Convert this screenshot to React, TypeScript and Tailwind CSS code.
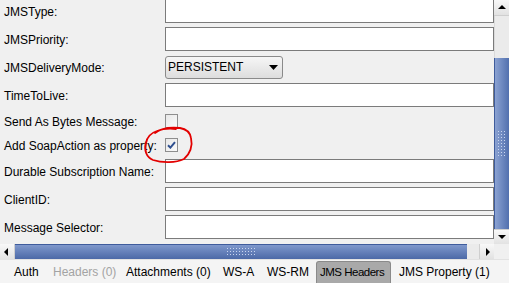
import React from 'react';

type Row = { label: string; kind: 'text' | 'select' | 'check'; checked?: boolean };

const rows: Row[] = [
  { label: 'JMSType:', kind: 'text' },
  { label: 'JMSPriority:', kind: 'text' },
  { label: 'JMSDeliveryMode:', kind: 'select' },
  { label: 'TimeToLive:', kind: 'text' },
  { label: 'Send As Bytes Message:', kind: 'check' },
  { label: 'Add SoapAction as property:', kind: 'check', checked: true },
  { label: 'Durable Subscription Name:', kind: 'text' },
  { label: 'ClientID:', kind: 'text' },
  { label: 'Message Selector:', kind: 'text' },
];

const tabs = [
  { name: 'Auth', w: 'w-[39px]' },
  { name: 'Headers (0)', w: 'w-[73px]', disabled: true },
  { name: 'Attachments (0)', w: 'w-[97px]' },
  { name: 'WS-A', w: 'w-[44px]' },
  { name: 'WS-RM', w: 'w-[49px]' },
  { name: 'JMS Headers', w: 'w-[75px]', selected: true },
  { name: 'JMS Property (1)', w: 'w-[100px]' },
];

function Grip({ vertical }: { vertical?: boolean }) {
  return (
    <div
      className={`${vertical ? 'w-[10px] h-[28px]' : 'w-[30px] h-[10px]'} bg-[radial-gradient(circle,#c9d5ef_0.8px,transparent_1px)] bg-[length:3px_3px]`}
    />
  );
}

function Arrow({ dir }: { dir: 'up' | 'down' | 'left' | 'right' }) {
  const pts = {
    up: '1,6 9,6 5,2',
    down: '1,3 9,3 5,7',
    left: '6,1 6,9 2,5',
    right: '4,1 4,9 8,5',
  }[dir];
  return (
    <svg width="10" height="10" viewBox="0 0 10 10">
      <polygon points={pts} fill="#000" />
    </svg>
  );
}

function Field({ row }: { row: Row }) {
  if (row.kind === 'text') {
    return <div className="flex-1 h-[24px] bg-white border border-[#7b7b7b]" />;
  }
  if (row.kind === 'select') {
    return (
      <div className="w-[118px] h-[23px] rounded-[3px] border border-[#8a8a8a] bg-gradient-to-b from-[#f6f6f6] to-[#dddddd] flex items-center justify-between pl-[2px] pr-[4px]">
        <span className="text-[12px] text-black">PERSISTENT</span>
        <svg width="9" height="5" viewBox="0 0 9 5">
          <polygon points="0,0 9,0 4.5,5" fill="#000" />
        </svg>
      </div>
    );
  }
  return (
    <div className="w-[13px] h-[14px] border border-[#8e8e8e] bg-gradient-to-br from-[#e8e8e8] to-[#fafafa] flex items-center justify-center">
      {row.checked && (
        <svg width="9" height="8" viewBox="0 0 9 8">
          <path d="M1 4.2 L3.4 6.6 L8 1.2" stroke="#2f4f8f" strokeWidth="2" fill="none" />
        </svg>
      )}
    </div>
  );
}

export default function App() {
  return (
    <div className="w-[509px] h-[283px] bg-[#f0f0f0] flex flex-col overflow-hidden font-['Liberation_Sans',Arial,sans-serif] text-[12px] text-black">
      {/* CONTENT + VERTICAL SCROLLBAR */}
      <div className="flex h-[244px] shrink-0">
        <div className="relative flex-1 overflow-hidden">
          <div className="flex flex-col -mt-[3px]">
            {rows.map((r) => (
              <div
                key={r.label}
                className={`flex items-center ${r.kind === 'check' ? 'h-[24px]' : 'h-[28px]'}`}
              >
                <div className="w-[165px] shrink-0 pl-[4px] pt-[1px] whitespace-nowrap">{r.label}</div>
                <Field row={r} />
              </div>
            ))}
          </div>
          <svg className="absolute left-[140px] top-[124px]" width="58" height="44" viewBox="140 124 58 44">
            <path
              d="M155 133 C160 129 170 127 180 128 C186 129 190 132 191 138 C193 146 190 154 184 159 C176 163 162 163 153 160 C146 157 144 150 146 143 C147 137 151 133 157 131 C162 129 168 128 176 129"
              stroke="#e30000"
              strokeWidth="1.8"
              fill="none"
              strokeLinecap="round"
            />
          </svg>
        </div>
        <div className="w-[15px] flex flex-col bg-[#ebebeb]">
          <div className="h-[16px] flex items-center justify-center bg-gradient-to-b from-[#f8f8f8] to-[#e2e2e2] border-b border-[#cfcfcf]">
            <Arrow dir="up" />
          </div>
          <div className="h-[42px] border-l border-[#dadada]" />
          <div className="flex-1 flex items-center justify-center bg-gradient-to-r from-[#8ba2d2] to-[#5270ae] border-l border-[#3f5c9c]">
            <Grip vertical />
          </div>
          <div className="h-[15px] flex items-center justify-center bg-gradient-to-b from-[#f8f8f8] to-[#e2e2e2] border-t border-[#cfcfcf]">
            <Arrow dir="down" />
          </div>
        </div>
      </div>

      {/* HORIZONTAL SCROLLBAR */}
      <div className="flex h-[15px] shrink-0 bg-[#ebebeb]">
        <div className="w-[15px] flex items-center justify-center bg-gradient-to-b from-[#f8f8f8] to-[#e2e2e2] border-r border-[#cfcfcf]">
          <Arrow dir="left" />
        </div>
        <div className="w-[452px] flex items-center justify-center bg-gradient-to-b from-[#7f98cc] to-[#4c69a7] border-t border-[#3f5c9c]">
          <Grip />
        </div>
        <div className="w-[12px]" />
        <div className="w-[15px] flex items-center justify-center bg-gradient-to-b from-[#f8f8f8] to-[#e2e2e2] border-l border-[#cfcfcf]">
          <Arrow dir="right" />
        </div>
        <div className="flex-1 bg-[#f0f0f0]" />
      </div>

      {/* TABS */}
      <div className="flex-1 flex items-end pl-[14px] bg-[#f4f4f4] border-t border-[#e2e2e2]">
        {tabs.map((t) =>
          t.selected ? (
            <div
              key={t.name}
              className={`${t.w} h-[22px] flex items-center pl-[3px] bg-[#a9a9a9] border border-b-0 border-[#8a8a8a] rounded-t-[3px] text-[11.5px] tracking-[-0.5px] whitespace-nowrap`}
            >
              {t.name}
            </div>
          ) : (
            <div
              key={t.name}
              className={`${t.w} h-[22px] flex items-center whitespace-nowrap ${t.disabled ? 'text-[#a3a3a3]' : ''} ${t.name.startsWith('JMS') ? 'pl-[8px]' : ''}`}
            >
              {t.name}
            </div>
          )
        )}
      </div>
    </div>
  );
}
